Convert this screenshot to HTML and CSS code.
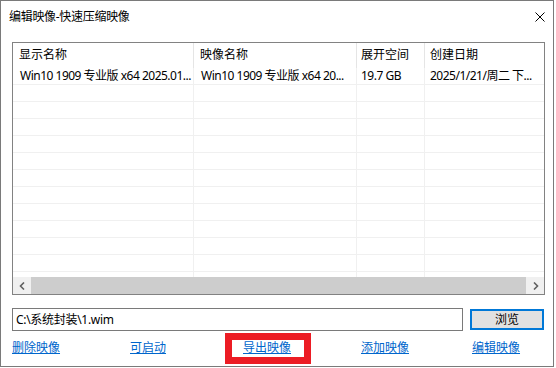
FILE: index.html
```html
<!DOCTYPE html>
<html>
<head>
  <meta charset="utf-8">
  <title>编辑映像-快速压缩映像</title>
  <link rel="stylesheet" href="styles.css">
</head>
<body>
  <div class="window">
    <div class="titlebar">
      <span class="title">编辑映像-快速压缩映像</span>
      <svg class="close" width="10" height="10" viewBox="0 0 10 10">
        <path d="M0.5 0.5 L9.5 9.5 M9.5 0.5 L0.5 9.5" stroke="#000" stroke-width="1" fill="none"/>
      </svg>
    </div>

    <div class="content">
      <!-- Lista de imagens -->
      <div class="listview">
        <div class="lv-head">
          <div class="cell">显示名称</div>
          <div class="cell">映像名称</div>
          <div class="cell">展开空间</div>
          <div class="cell">创建日期</div>
        </div>
        <div class="lv-body">
          <div class="row">
            <div class="cell">Win10 1909 专业版 x64 2025.01...</div>
            <div class="cell">Win10 1909 专业版 x64 20...</div>
            <div class="cell">19.7 GB</div>
            <div class="cell">2025/1/21/周二 下...</div>
          </div>
          <div class="row"><div class="cell"></div><div class="cell"></div><div class="cell"></div><div class="cell"></div></div>
          <div class="row"><div class="cell"></div><div class="cell"></div><div class="cell"></div><div class="cell"></div></div>
          <div class="row"><div class="cell"></div><div class="cell"></div><div class="cell"></div><div class="cell"></div></div>
          <div class="row"><div class="cell"></div><div class="cell"></div><div class="cell"></div><div class="cell"></div></div>
          <div class="row"><div class="cell"></div><div class="cell"></div><div class="cell"></div><div class="cell"></div></div>
          <div class="row"><div class="cell"></div><div class="cell"></div><div class="cell"></div><div class="cell"></div></div>
          <div class="row"><div class="cell"></div><div class="cell"></div><div class="cell"></div><div class="cell"></div></div>
          <div class="row"><div class="cell"></div><div class="cell"></div><div class="cell"></div><div class="cell"></div></div>
          <div class="row"><div class="cell"></div><div class="cell"></div><div class="cell"></div><div class="cell"></div></div>
          <div class="row"><div class="cell"></div><div class="cell"></div><div class="cell"></div><div class="cell"></div></div>
          <div class="row"><div class="cell"></div><div class="cell"></div><div class="cell"></div><div class="cell"></div></div>
          <div class="row row-last"><div class="cell"></div><div class="cell"></div><div class="cell"></div><div class="cell"></div></div>
        </div>
        <div class="hscroll">
          <div class="sb-btn">
            <svg width="6" height="8" viewBox="0 0 6 8"><path d="M5 0.5 L1.5 4 L5 7.5" stroke="#606060" stroke-width="1.6" fill="none"/></svg>
          </div>
          <div class="sb-thumb"></div>
          <div class="sb-btn">
            <svg width="6" height="8" viewBox="0 0 6 8"><path d="M1 0.5 L4.5 4 L1 7.5" stroke="#606060" stroke-width="1.6" fill="none"/></svg>
          </div>
        </div>
      </div>

      <!-- Caminho do arquivo -->
      <div class="path-row">
        <div class="path-input">C:\系统封装\1.wim</div>
        <button class="browse">浏览</button>
      </div>

      <!-- Ações -->
      <div class="links">
        <a href="#">删除映像</a>
        <a href="#">可启动</a>
        <a href="#" class="export">导出映像</a>
        <a href="#">添加映像</a>
        <a href="#">编辑映像</a>
      </div>
    </div>
  </div>
</body>
</html>
```

FILE: styles.css
```css
/* Reset básico */
* {
  box-sizing: border-box;
}

body {
  margin: 0;
  font-family: "Noto Sans", "Noto Sans CJK SC", sans-serif;
  font-size: 12px;
  color: #000;
  background-color: #ffffff;
}

/* Janela */
.window {
  width: 554px;
  height: 367px;
  border: 1px solid #7a7a7a;
  background-color: #ffffff;
}

.titlebar {
  height: 30px;
  display: flex;
  align-items: center;
  justify-content: space-between;
  padding: 1px 8px 0 8px;
}

.title {
  line-height: 16px;
  letter-spacing: -0.3px;
}

.content {
  padding: 11px 8px 0 11px;
}

/* Lista */
.listview {
  height: 253px;
  border: 1px solid #828282;
  display: flex;
  flex-direction: column;
}

.lv-head,
.row {
  display: grid;
  grid-template-columns: 181px 163px 68px 1fr;
}

.lv-head {
  height: 25px;
  line-height: 24px;
}

.lv-head .cell {
  border-right: 1px solid #e5e5e5;
  padding-left: 6px;
}

.lv-head .cell:last-child {
  border-right: none;
}

.lv-body {
  flex: 1;
  overflow: hidden;
}

.row {
  height: 17px;
  border-bottom: 1px solid #f0f0f0;
  line-height: 16px;
}

.row-last {
  border-bottom: none;
}

.cell {
  white-space: nowrap;
  overflow: hidden;
  padding-left: 7px;
}

.row .cell {
  border-right: 1px solid #f0f0f0;
  letter-spacing: -0.5px;
}

.row .cell:last-child {
  border-right: none;
}

.row .cell:nth-child(3),
.lv-head .cell:nth-child(3) {
  padding-left: 4px;
}

.row .cell:nth-child(4),
.lv-head .cell:nth-child(4) {
  padding-left: 5px;
}

/* Barra de rolagem */
.hscroll {
  height: 17px;
  display: flex;
  background-color: #f0f0f0;
}

.sb-btn {
  width: 17px;
  display: flex;
  align-items: center;
  justify-content: center;
}

.sb-thumb {
  flex: 1;
  margin: 0 1px;
  background-color: #cdcdcd;
}

/* Caminho */
.path-row {
  margin-top: 13px;
  display: flex;
  align-items: center;
  gap: 7px;
}

.path-input {
  width: 451px;
  height: 23px;
  border: 1px solid #7a7a7a;
  padding-left: 3px;
  line-height: 21px;
  white-space: nowrap;
  letter-spacing: -0.3px;
}

.browse {
  width: 74px;
  height: 21px;
  padding: 0;
  border: 2px solid #0078d7;
  background-color: #e1e1e1;
  font: inherit;
  color: #000;
  line-height: 17px;
}

/* Links */
.links {
  margin-top: 9px;
  display: grid;
  grid-template-columns: 118px 113px 118px 111px auto;
  line-height: 16px;
}

.links a {
  color: #0066cc;
  text-decoration: underline;
  justify-self: start;
}

/* Destaque em vermelho */
.export {
  position: relative;
}

.export::after {
  content: "";
  position: absolute;
  left: -18px;
  right: -20px;
  top: -7px;
  bottom: -8px;
  border: 7px solid #ec1c24;
}
```
